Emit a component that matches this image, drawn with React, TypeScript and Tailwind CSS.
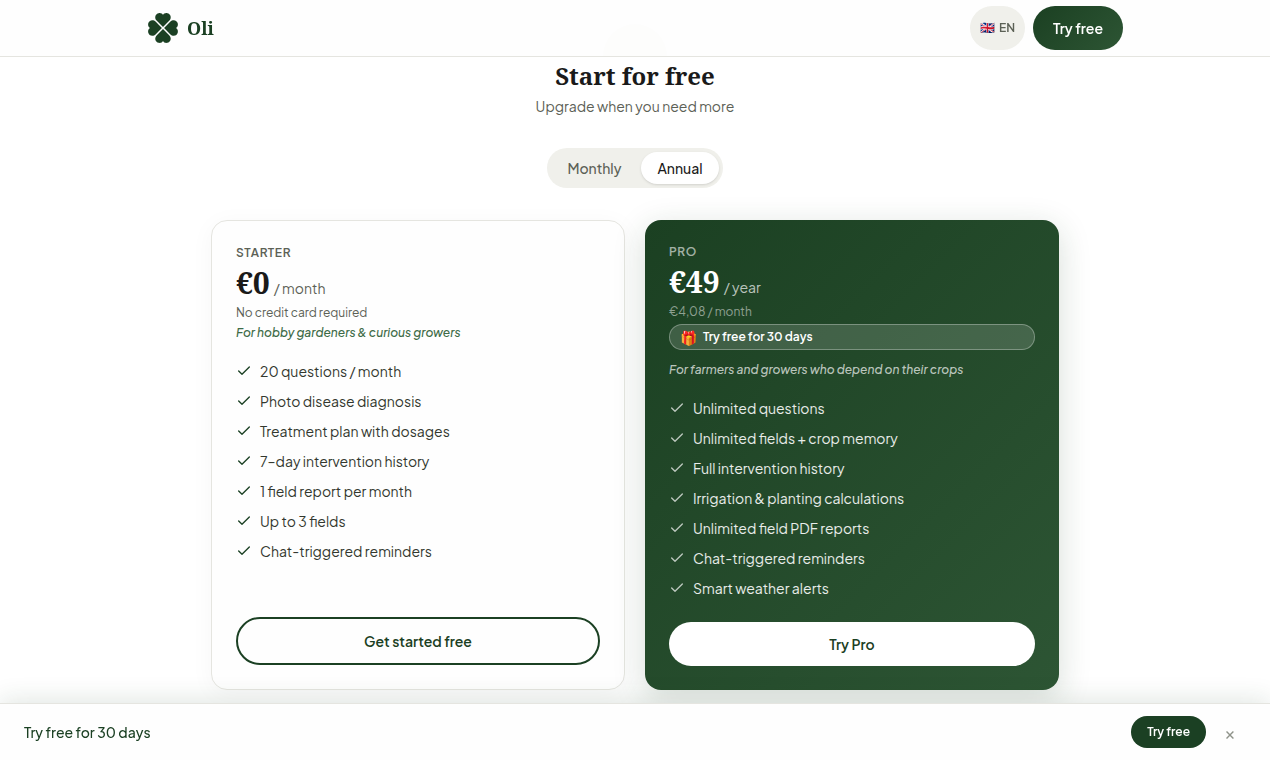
import React, { useState } from "react";
import { Check } from "lucide-react";

const starterFeatures = [
  "20 questions / month",
  "Photo disease diagnosis",
  "Treatment plan with dosages",
  "7–day intervention history",
  "1 field report per month",
  "Up to 3 fields",
  "Chat-triggered reminders",
];

const proFeatures = [
  "Unlimited questions",
  "Unlimited fields + crop memory",
  "Full intervention history",
  "Irrigation & planting calculations",
  "Unlimited field PDF reports",
  "Chat-triggered reminders",
  "Smart weather alerts",
];

const petal =
  "M0 -1.1 L-6.2 -7.2 C-9.2 -10.3 -7.4 -14.2 -4.4 -14.8 C-2.4 -15.2 -0.7 -14.4 0 -13 C0.7 -14.4 2.4 -15.2 4.4 -14.8 C7.4 -14.2 9.2 -10.3 6.2 -7.2 Z";

const Clover = () => (
  <svg
    width="32"
    height="32"
    viewBox="-16 -16 32 32"
    fill="#1b4023"
    aria-hidden="true"
  >
    <path d={petal} />
    <path d={petal} transform="rotate(90)" />
    <path d={petal} transform="rotate(180)" />
    <path d={petal} transform="rotate(270)" />
  </svg>
);

export default function App() {
  const [annual, setAnnual] = useState(true);
  const [showBar, setShowBar] = useState(true);

  return (
    <div className="min-h-screen bg-white font-['Plus_Jakarta_Sans','Inter',sans-serif] text-[#1a1a1a]">
      <header className="fixed inset-x-0 top-0 z-20 border-b border-[#e5e5e0] bg-[#fefefe]/90">
        <div className="mx-auto flex h-14 max-w-5xl items-center justify-between px-6">
          <a href="#" className="flex items-center gap-2">
            <Clover />
            <span className="font-['Noto_Serif','DejaVu_Serif_Condensed','DejaVu_Serif',serif] text-lg font-bold text-[#1b4023]">
              Oli
            </span>
          </a>
          <div className="flex items-center gap-2">
            <button className="flex h-11 items-center gap-1 rounded-full bg-[#f0f0eb] px-2.5 text-xs font-semibold text-[#5c6156]">
              <span>🇬🇧</span>
              <span>EN</span>
            </button>
            <button className="h-11 rounded-full bg-linear-135 from-[#1b4022] to-[#2d5534] px-5 text-sm font-semibold text-white">
              Try free
            </button>
          </div>
        </div>
      </header>

      <main className="mx-auto max-w-4xl px-6 pt-6 pb-20">
        <div className="mx-auto h-8 w-16 rounded-t-full bg-[#f0f0eb]" />
        <div className="pt-1 text-center">
          <h2 className="font-['Noto_Serif','DejaVu_Serif_Condensed','DejaVu_Serif',serif] text-2xl font-bold">
            Start for free
          </h2>
          <p className="mt-1 text-sm text-[#5c6156]">
            Upgrade when you need more
          </p>
        </div>

        <div className="mt-8 flex justify-center">
          <div className="flex h-10 gap-1 rounded-full bg-[#f0f0eb] p-1 text-sm font-medium">
            <button
              onClick={() => setAnnual(false)}
              className={
                annual
                  ? "rounded-full px-4 text-[#5c6156]"
                  : "rounded-full bg-white px-4 shadow-sm"
              }
            >
              Monthly
            </button>
            <button
              onClick={() => setAnnual(true)}
              className={
                annual
                  ? "rounded-full bg-white px-4 shadow-sm"
                  : "rounded-full px-4 text-[#5c6156]"
              }
            >
              Annual
            </button>
          </div>
        </div>

        <div className="mt-8 grid gap-5 sm:grid-cols-2">
          <div className="flex flex-col rounded-2xl border border-[#e5e5e0] bg-[#fefefe] p-6 shadow-[0_4px_24px_rgba(0,0,0,0.04)]">
            <p className="text-xs leading-4 font-semibold tracking-wider text-[#5c6156]">
              STARTER
            </p>
            <p className="flex items-baseline gap-1">
              <span className="font-['Noto_Serif','DejaVu_Serif_Condensed','DejaVu_Serif',serif] text-[30px] leading-11 font-bold">
                €0
              </span>
              <span className="text-sm text-[#5c6156]">/ month</span>
            </p>
            <p className="text-xs leading-4 text-[#5c6156]">
              No credit card required
            </p>
            <p className="mt-1 text-xs leading-4 font-medium text-[#3d6b47] italic">
              For hobby gardeners &amp; curious growers
            </p>
            <ul className="mt-[19px] mb-[23px] space-y-2 text-sm text-[#33382f]">
              {starterFeatures.map((feature) => (
                <li key={feature} className="flex h-[22px] items-center gap-2">
                  <Check size={16} strokeWidth={2} color="#1b4023" />
                  {feature}
                </li>
              ))}
            </ul>
            <button className="mt-auto h-12 rounded-full border-2 border-[#1b4023] text-sm font-semibold text-[#1b4023]">
              Get started free
            </button>
          </div>

          <div className="flex flex-col rounded-2xl bg-linear-135 from-[#1b4022] to-[#2d5534] p-6 text-white shadow-[0_8px_32px_rgba(27,64,34,0.18)]">
            <p className="text-xs leading-4 font-semibold tracking-wider text-white/60">
              PRO
            </p>
            <p className="flex items-baseline gap-1">
              <span className="font-['Noto_Serif','DejaVu_Serif_Condensed','DejaVu_Serif',serif] text-[30px] leading-11 font-bold">
                {annual ? "€49" : "€4,99"}
              </span>
              <span className="text-sm text-white/70">
                {annual ? "/ year" : "/ month"}
              </span>
            </p>
            <p className="text-xs leading-4 text-white/50">€4,08 / month</p>
            <p className="mt-1 flex h-[26px] items-center gap-1.5 rounded-full border border-white/30 bg-white/15 px-2.5 text-xs font-semibold">
              <span className="text-sm leading-none">🎁</span>
              Try free for 30 days
            </p>
            <p className="mt-3 text-xs leading-4 font-medium text-white/70 italic">
              For farmers and growers who depend on their crops
            </p>
            <ul className="mt-[19px] mb-[23px] space-y-2 text-sm text-white/90">
              {proFeatures.map((feature) => (
                <li key={feature} className="flex h-[22px] items-center gap-2">
                  <Check size={16} strokeWidth={2} className="text-white/70" />
                  {feature}
                </li>
              ))}
            </ul>
            <button className="mt-auto h-11 rounded-full bg-white text-sm font-semibold text-[#1b4023]">
              Try Pro
            </button>
          </div>
        </div>
      </main>

      {showBar && (
        <div className="fixed inset-x-0 bottom-0 z-20 flex h-[57px] items-center justify-between border-t border-[#e5e5e0] bg-[#fefefe] px-6 shadow-[0_-4px_24px_rgba(27,64,34,0.12)]">
          <p className="text-sm font-medium text-[#1b4023]">
            Try free for 30 days
          </p>
          <div className="flex items-center gap-2">
            <button className="h-8 rounded-full bg-[#1b4023] px-4 text-xs font-semibold text-white">
              Try free
            </button>
            <button
              aria-label="Close"
              onClick={() => setShowBar(false)}
              className="size-8 text-lg text-[#8f938a]"
            >
              ×
            </button>
          </div>
        </div>
      )}
    </div>
  );
}
